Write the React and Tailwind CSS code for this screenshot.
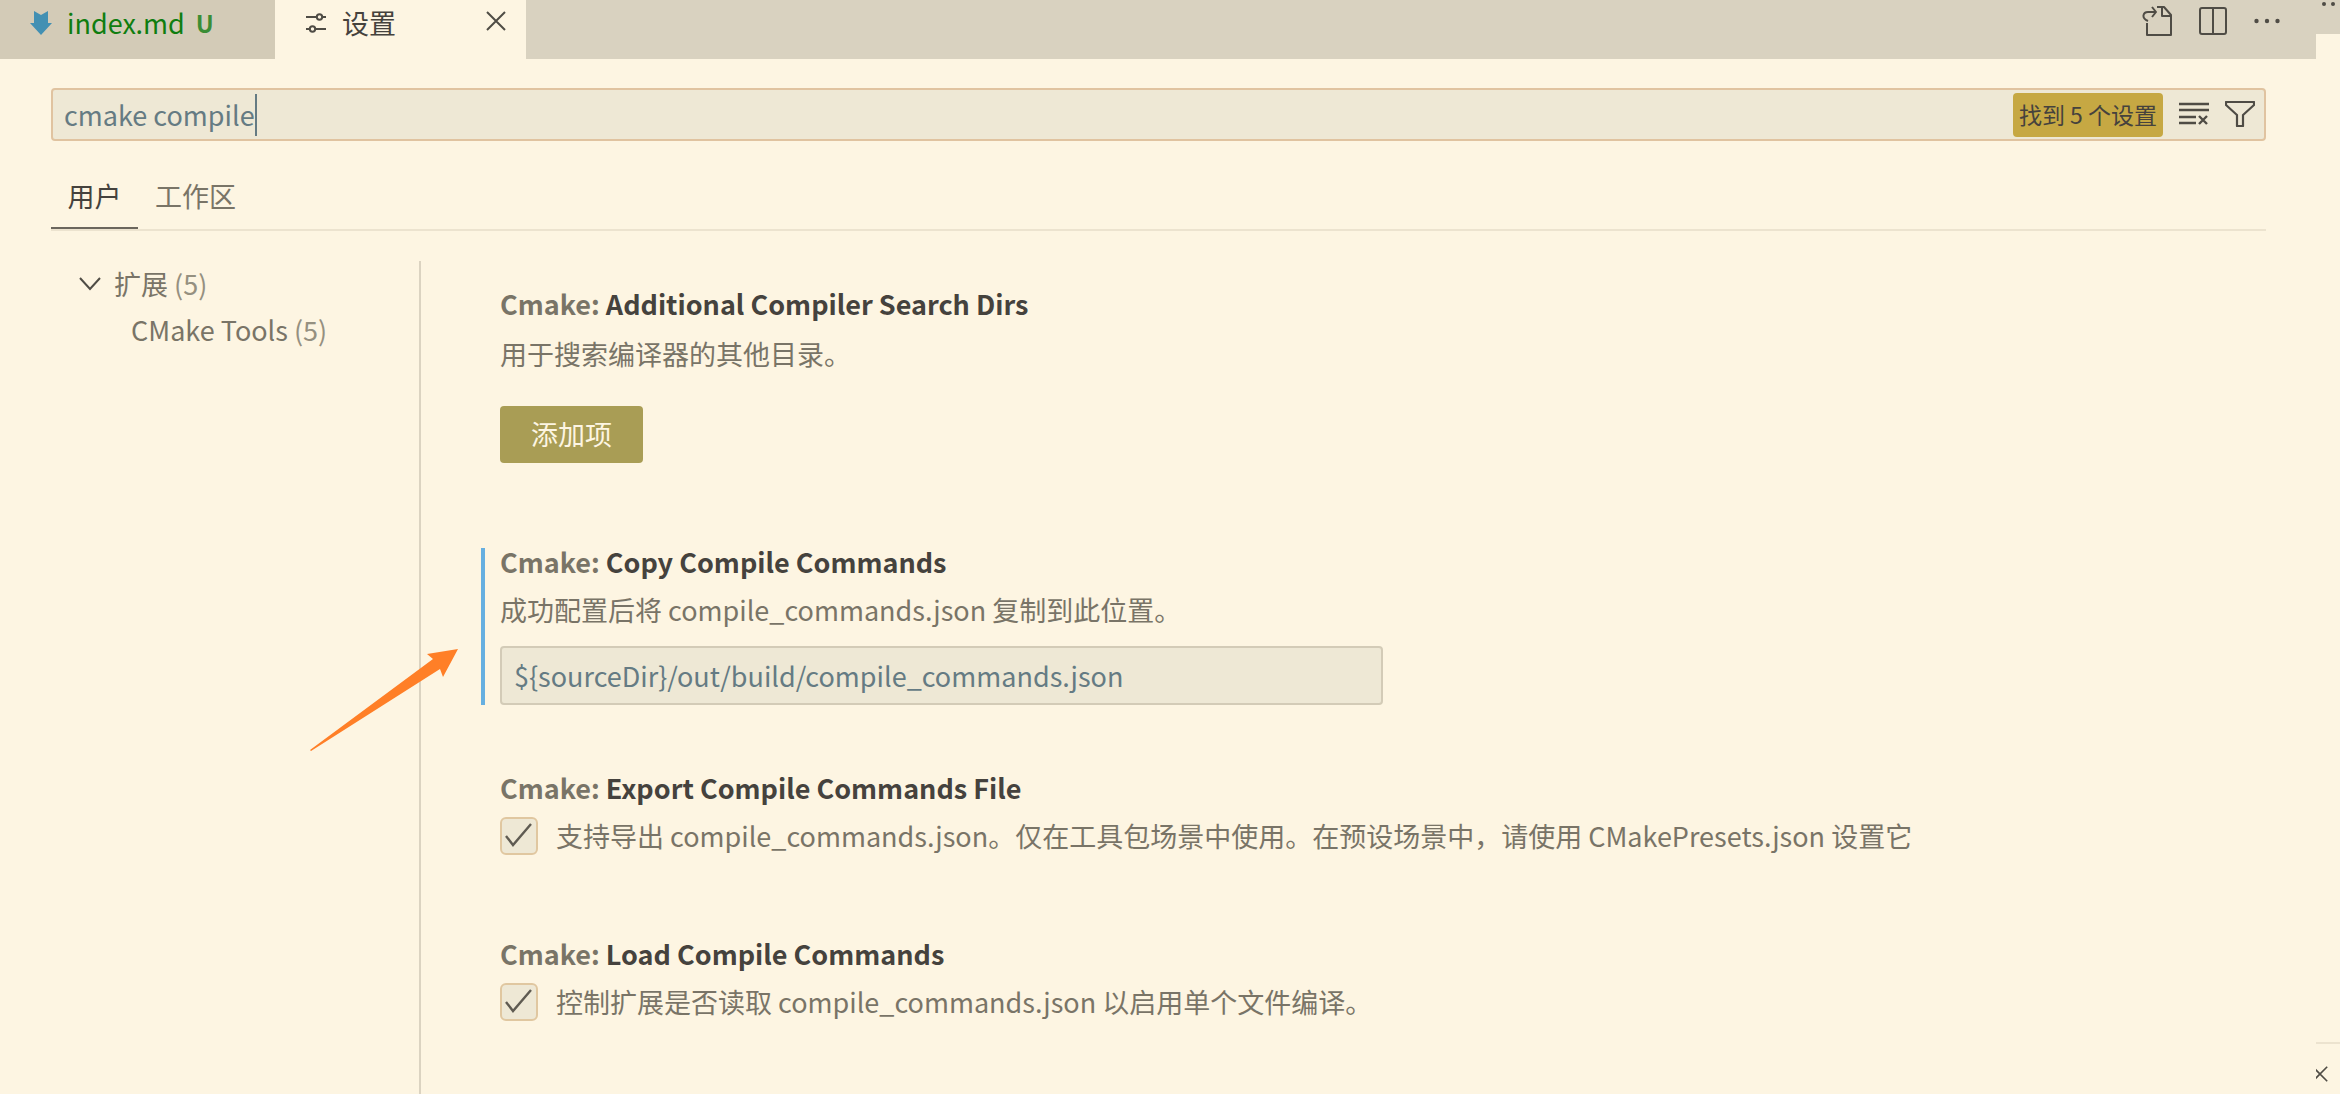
const STROKE = "stroke-[#4f4c45]";

function MarkdownIcon() {
  return (
    <svg viewBox="0 0 22 24" className="h-6 w-[22px]" aria-hidden="true">
      <path d="M4 0l7 4 7-4v12h4L11 24 0 12h4z" fill="#4290b3" />
    </svg>
  );
}

function SlidersIcon() {
  return (
    <svg viewBox="0 0 22 22" className={`h-[22px] w-[22px] ${STROKE}`} fill="none" strokeWidth="2" aria-hidden="true">
      <path d="M1 5h11M17 5h4M1 17h4M10 17h11" />
      <circle cx="14.500" cy="5" r="2.700" />
      <circle cx="7.500" cy="17" r="2.700" />
    </svg>
  );
}

function CloseIcon({ className }) {
  return (
    <svg viewBox="0 0 20 20" className={className} fill="none" strokeWidth="2" aria-hidden="true">
      <path d="M1 1l18 18M19 1L1 19" />
    </svg>
  );
}

function OpenFileIcon() {
  return (
    <svg viewBox="0 0 30 30" className={`h-[30px] w-[30px] ${STROKE}`} fill="none" strokeWidth="2" strokeLinejoin="round" aria-hidden="true">
      <path d="M5 17v12h24V9l-7-8h-7" />
      <path d="M20 1v9h9" />
      <path d="M6 15C-1 12 1 6 6 6h8M10 1l4 5-4 5" />
    </svg>
  );
}

function SplitIcon() {
  return (
    <svg viewBox="0 0 28 28" className={`h-7 w-7 ${STROKE}`} fill="none" strokeWidth="2" aria-hidden="true">
      <rect x="1" y="1" width="26" height="26" rx="2" />
      <path d="M14 1v26" />
    </svg>
  );
}

function MoreIcon() {
  return (
    <svg viewBox="0 0 26 6" className="h-1.5 w-[26px] fill-[#4f4c45]" aria-hidden="true">
      <circle cx="2.500" cy="3" r="2.200" />
      <circle cx="13" cy="3" r="2.200" />
      <circle cx="23.500" cy="3" r="2.200" />
    </svg>
  );
}

function ClearListIcon() {
  return (
    <svg viewBox="0 0 30 24" className={`h-6 w-[30px] ${STROKE}`} fill="none" strokeWidth="2.400" aria-hidden="true">
      <path d="M0 2h30M0 8h30M0 15h17M0 21h17M20 14l8 8M28 14l-8 8" />
    </svg>
  );
}

function FilterIcon() {
  return (
    <svg viewBox="0 0 30 26" className={`h-[26px] w-[30px] ${STROKE}`} fill="none" strokeWidth="2.200" strokeLinejoin="round" aria-hidden="true">
      <path d="M1 1h28v3L18 14v11h-6V14L1 4z" />
    </svg>
  );
}

function Arrow() {
  return (
    <svg viewBox="0 0 150 102" className="absolute top-[388px] left-[258px] h-[102px] w-[150px]" aria-hidden="true">
      <path d="M149 0l-31 5 6 5L1 101l1 1L131 20l3 8z" fill="#ff7f27" />
    </svg>
  );
}

function Title({ children }) {
  return (
    <h2 className="leading-7 font-bold text-[#45423d]">
      <span className="text-[#797467]">Cmake: </span>
      {children}
    </h2>
  );
}

function CheckSetting({ id, title, children }) {
  return (
    <section className="flex flex-col gap-3.5">
      <Title>{title}</Title>
      <div className="flex items-center gap-[18px]">
        <span className="relative flex h-[38px] w-[38px]">
          <input
            id={id}
            type="checkbox"
            defaultChecked
            className="h-full w-full appearance-none rounded-md border-2 border-[#e0c7a0] bg-[#eee8d5]"
          />
          <svg viewBox="0 0 38 38" className="pointer-events-none absolute inset-0 stroke-[#5f5b52]" fill="none" strokeWidth="2.400" aria-hidden="true">
            <path d="M6 19l7 9L31 7" />
          </svg>
        </span>
        <label htmlFor={id} className="leading-10">{children}</label>
      </div>
    </section>
  );
}

export default function App() {
  return (
    <div className="flex min-h-screen bg-[#fdf5e2] font-['Noto_Sans_CJK_SC',sans-serif] text-[27px] text-[#797467]">
      <div className="flex min-w-0 flex-1 flex-col">
        <header className="flex h-[59px] items-start bg-[#d9d2c0]">
          <button className="flex h-full w-[275px] items-start gap-[15px] bg-[#d3cbb7] pt-[3px] pl-[30px]">
            <span className="pt-2"><MarkdownIcon /></span>
            <span className="-mr-1 leading-10 text-[#0f7d0f]">index.md</span>
            <span className="text-2xl leading-10 font-bold text-[#3a8d35]">U</span>
          </button>
          <div className="flex h-full w-[251px] items-start justify-between bg-[#fdf5e2] pt-[3px] pr-5 pl-[30px]">
            <button className="flex h-10 items-center gap-[15px] text-[#45423d]">
              <SlidersIcon />
              <span className="leading-10">设置</span>
            </button>
            <button aria-label="关闭" className="flex h-9 items-center">
              <CloseIcon className={`h-5 w-5 ${STROKE}`} />
            </button>
          </div>
          <div className="ml-auto flex h-[42px] items-center gap-[27px] pr-9">
            <button aria-label="打开设置"><OpenFileIcon /></button>
            <button aria-label="拆分编辑器"><SplitIcon /></button>
            <button aria-label="更多"><MoreIcon /></button>
          </div>
        </header>

        <div className="flex flex-1 flex-col pt-[29px] pr-[50px] pl-[51px]">
          <div className="flex h-[53px] items-center rounded border-2 border-[#e0c3a0] bg-[#eee8d5] pr-[9px] pl-[11px]">
            <div className="flex flex-1 items-center">
              <input
                aria-label="搜索设置"
                defaultValue="cmake compile"
                className="field-sizing-content bg-transparent leading-10 text-[#657b83] outline-none"
              />
              <span className="h-[42px] w-0.5 bg-[#657b83]" />
            </div>
            <span className="rounded bg-[#c6a843] px-1.5 pb-0.5 text-[23px] leading-[42px] text-[#45423d]">找到 5 个设置</span>
            <button aria-label="清除搜索" className="ml-4 pb-0.5"><ClearListIcon /></button>
            <button aria-label="筛选" className="ml-4 pb-0.5"><FilterIcon /></button>
          </div>

          <nav className="mt-[30px] flex h-[60px] border-b-2 border-[#ece3cf]">
            <button className="w-[87px] border-b-2 border-[#6b665d] pb-1.5 text-[#45423d]">用户</button>
            <button className="px-[17px] pb-2">工作区</button>
          </nav>

          <div className="relative mt-[30px] flex flex-1">
            <aside className="w-[370px] border-r-2 border-[#dbd3c1] pl-7">
              <button className="flex h-[46px] items-center gap-[13px]">
                <svg viewBox="0 0 22 14" className={`h-3.5 w-[22px] ${STROKE}`} fill="none" strokeWidth="2" aria-hidden="true">
                  <path d="M1 1l10 11L21 1" />
                </svg>
                <span>扩展 <span className="text-[#959080]">(5)</span></span>
              </button>
              <button className="flex h-[47px] items-center pl-[52px]">
                <span>CMake Tools <span className="text-[#959080]">(5)</span></span>
              </button>
            </aside>

            <main className="flex-1 pt-[29px] pl-[79px]">
              <section className="flex flex-col items-start">
                <Title>Additional Compiler Search Dirs</Title>
                <p className="mt-4 leading-10">用于搜索编译器的其他目录。</p>
                <button className="mt-8 h-[57px] rounded bg-[#a99d55] px-[31px] text-[#fdf5e2]">添加项</button>
              </section>

              <section className="relative mt-[85px] h-[157px]">
                <span className="absolute inset-y-0 -left-[19px] w-1 bg-[#66afe0]" />
                <label htmlFor="copy-commands" className="block">
                  <Title>Copy Compile Commands</Title>
                  <span className="mt-3.5 block leading-10">成功配置后将 compile_commands.json 复制到此位置。</span>
                </label>
                <input
                  id="copy-commands"
                  defaultValue="${sourceDir}/out/build/compile_commands.json"
                  className="mt-4 h-[59px] w-[883px] rounded border-2 border-[#d3cbb7] bg-[#eee8d5] px-3 text-[#657b83] outline-none"
                />
              </section>

              <div className="mt-[69px] flex flex-col gap-21">
                <CheckSetting id="export-commands" title="Export Compile Commands File">
                  支持导出 compile_commands.json。仅在工具包场景中使用。在预设场景中，请使用 CMakePresets.json 设置它
                </CheckSetting>
                <CheckSetting id="load-commands" title="Load Compile Commands">
                  控制扩展是否读取 compile_commands.json 以启用单个文件编译。
                </CheckSetting>
              </div>
            </main>
            <Arrow />
          </div>
        </div>
      </div>

      <div className="flex w-6 flex-col justify-between overflow-hidden">
        <div className="flex h-[34px] justify-center gap-[5px] bg-[#d9d2c0] pt-0.5">
          <span className="h-1 w-1 rounded-full bg-[#4f4c45]" />
          <span className="h-1 w-1 rounded-full bg-[#4f4c45]" />
        </div>
        <div className="h-[52px] border-t-2 border-[#ece3cf] pt-[22px]">
          <button aria-label="关闭面板" className="-ml-1 block">
            <CloseIcon className={`h-4 w-4 ${STROKE}`} />
          </button>
        </div>
      </div>
    </div>
  );
}
